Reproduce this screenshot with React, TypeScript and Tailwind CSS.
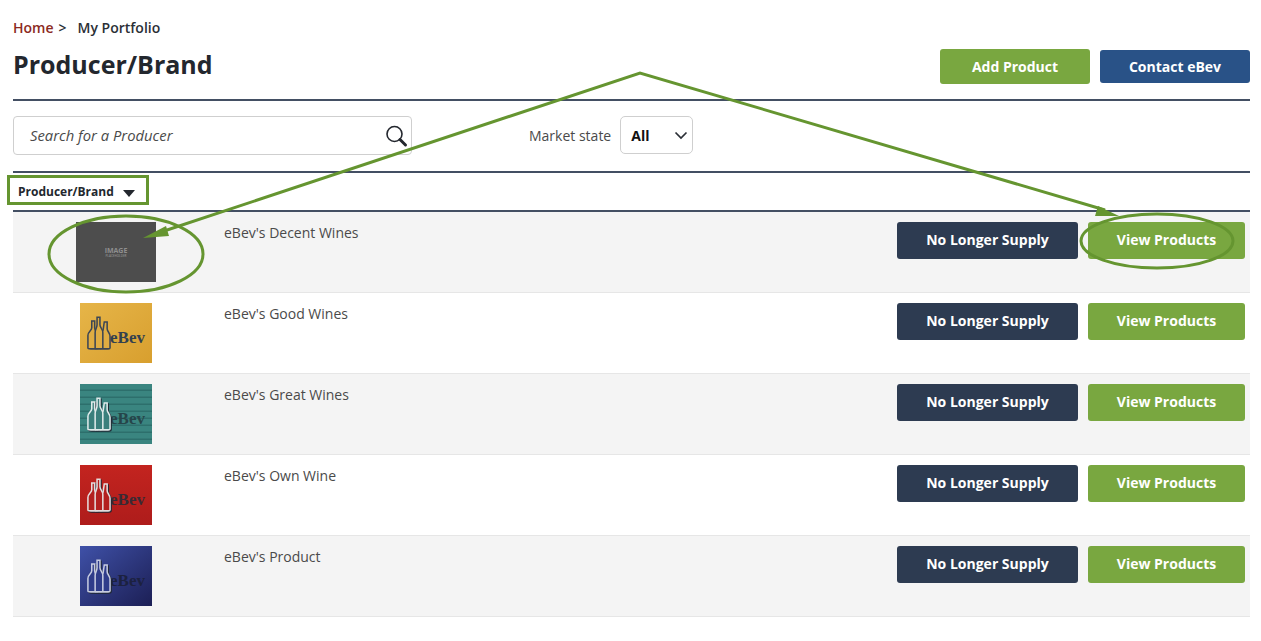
const font = { fontFamily: '"Open Sans", sans-serif' };
const logoFont = { fontFamily: '"Liberation Serif", serif' };

const brands = [
  { name: "eBev's Decent Wines", logo: "placeholder" },
  { name: "eBev's Good Wines", logo: "gold" },
  { name: "eBev's Great Wines", logo: "teal" },
  { name: "eBev's Own Wine", logo: "red" },
  { name: "eBev's Product", logo: "blue" },
];

function Bottles({ color, fill, shadow }: { color: string; fill: string; shadow?: boolean }) {
  return (
    <svg
      viewBox="0 0 26 36"
      className={`h-[35px] w-[25px] shrink-0 ${shadow ? "drop-shadow-[1px_1px_0_#1f2733]" : ""}`}
    >
      <g fill={fill} stroke={color} strokeWidth="1.6">
        <path d="M6 5 h3 v7 c0 3 3 4 3 8 v13 c0 1 -1 1 -2 1 h-5 c-1 0 -3 0 -3 -1 v-13 c0 -4 4 -5 4 -8 z" />
        <path d="M19 6 h3 v7 c0 3 3 4 3 8 v12 c0 1 -1 1 -2 1 h-5 c-1 0 -3 0 -3 -1 v-12 c0 -4 3 -5 3 -8 z" />
        <path d="M11.5 1 h3 v8 c0 3 3 4 3 8 v16 c0 1 -1 1 -2 1 h-4 c-1 0 -2 0 -2 -1 v-16 c0 -4 2 -5 2 -8 z" />
      </g>
    </svg>
  );
}

function LogoText({ className }: { className: string }) {
  return (
    <span className={`ml-[-1px] mt-[9px] text-[17px] font-bold leading-[20px] ${className}`} style={logoFont}>
      eBev
    </span>
  );
}

function Logo({ kind }: { kind: string }) {
  if (kind === "placeholder") {
    return (
      <div className="ml-[63px] flex h-[60px] w-[80px] flex-col items-center justify-center bg-[#4d4d4d] text-[#8f8f8f]">
        <span className="text-[7px] leading-[7px] font-bold">IMAGE</span>
        <span className="text-[3px] leading-[4px] font-semibold">PLACEHOLDER</span>
      </div>
    );
  }
  if (kind === "gold") {
    return (
      <div className="ml-[67px] flex h-[60px] w-[72px] items-center bg-gradient-to-br from-[#e6b548] to-[#d89f2e] pl-[6px]">
        <Bottles color="#3c4654" fill="#e0ad42" />
        <LogoText className="text-[#33404f]" />
      </div>
    );
  }
  if (kind === "teal") {
    return (
      <div className="ml-[67px] flex h-[60px] w-[72px] items-center bg-[repeating-linear-gradient(180deg,#3a8580_0px,#3a8580_5px,#2d6f6c_6px,#2d6f6c_7px)] pl-[6px]">
        <Bottles color="#dfeaea" fill="#3a7f7c" shadow />
        <LogoText className="text-[#26454a]" />
      </div>
    );
  }
  if (kind === "red") {
    return (
      <div className="ml-[67px] flex h-[60px] w-[72px] items-center bg-gradient-to-b from-[#c3241f] to-[#ae1c1b] pl-[6px]">
        <Bottles color="#e4dcdc" fill="#b3201f" shadow />
        <LogoText className="text-[#3a2a34]" />
      </div>
    );
  }
  return (
    <div className="ml-[67px] flex h-[60px] w-[72px] items-center bg-gradient-to-br from-[#3f51a8] to-[#1c1f55] pl-[6px]">
      <Bottles color="#c6cbe0" fill="#2f3c8a" shadow />
      <LogoText className="text-[#1c2140]" />
    </div>
  );
}

function Rule() {
  return <div className="h-[2px] bg-[#434f63]" />;
}

export default function App() {
  return (
    <div className="relative h-[641px] w-[1261px] overflow-hidden bg-white pl-[13px] pr-[11px] pt-[19px]" style={font}>
      {/* Breadcrumb */}
      <div className="flex h-[18px] items-center text-[14px] font-semibold leading-[18px] text-[#2b2f36]">
        <span className="text-[#8c2a22]">Home</span>
        <span className="ml-[5px]">&gt;</span>
        <span className="ml-[11px]">My Portfolio</span>
      </div>

      {/* Title row */}
      <div className="mt-[12px] flex h-[50px] items-start justify-between">
        <h1 className="mt-[-4px] text-[25px] font-bold leading-[38px] text-[#23272e]">Producer/Brand</h1>
        <div className="flex items-center gap-[10px]">
          <button className="h-[35px] w-[150px] rounded-[3px] bg-[#79a740] text-[14px] font-bold text-white">
            Add Product
          </button>
          <button className="h-[33px] w-[150px] rounded-[3px] bg-[#295287] text-[14px] font-bold text-white">
            Contact eBev
          </button>
        </div>
      </div>
      <Rule />

      {/* Filters */}
      <div className="flex h-[70px] items-start pt-[15px]">
        <div className="flex h-[39px] w-[399px] items-center justify-between rounded-[4px] border border-[#cfcfcf] pl-[16px] pr-[3px]">
          <span className="text-[14.8px] italic text-[#4a4a4a]">Search for a Producer</span>
          <svg viewBox="0 0 24 24" className="h-[24px] w-[24px]" fill="none" stroke="#23272e">
            <circle cx="10.5" cy="10" r="7.5" strokeWidth="1.6" />
            <path d="M16 15.5 L21.5 21" strokeWidth="3" strokeLinecap="round" />
          </svg>
        </div>
        <div className="ml-[117px] flex h-[38px] items-center">
          <span className="text-[14px] text-[#4a4a4a]">Market state</span>
          <div className="ml-[9px] flex h-[38px] w-[73px] items-center justify-between rounded-[5px] border border-[#cfcfcf] pl-[10px] pr-[3px]">
            <span className="text-[14px] font-bold text-[#111]">All</span>
            <svg viewBox="0 0 16 16" className="h-[16px] w-[16px]" fill="none" stroke="#2b2f36" strokeWidth="1.7">
              <path d="M2.5 5.5 L8 11 L13.5 5.5" />
            </svg>
          </div>
        </div>
      </div>
      <Rule />

      {/* Table header */}
      <div className="flex h-[37px] items-center pl-[5px]">
        <span className="text-[12px] font-bold text-[#23272e]">Producer/Brand</span>
        <svg viewBox="0 0 12 7" className="ml-[9px] mt-[3px] h-[7px] w-[12px]" fill="#23272e">
          <path d="M0 0 H12 L6 7 Z" />
        </svg>
      </div>
      <Rule />

      {/* Rows */}
      {brands.map((brand, i) => (
        <div
          key={brand.name}
          className={`flex h-[81px] items-start border-b border-[#e6e6e6] pt-[10px] ${i % 2 === 0 ? "bg-[#f4f4f4]" : "bg-white"}`}
        >
          <div className="w-[211px]">
            <Logo kind={brand.logo} />
          </div>
          <div className="flex-1 text-[14px] leading-[22px] text-[#4a4a4a]">{brand.name}</div>
          <div className="flex gap-[10px] pr-[5px]">
            <button className="h-[37px] w-[181px] rounded-[3px] bg-[#2d3b51] pb-[2px] text-[14px] font-bold text-white">
              No Longer Supply
            </button>
            <button className="h-[37px] w-[157px] rounded-[3px] bg-[#79a740] pb-[2px] text-[14px] font-bold text-white">
              View Products
            </button>
          </div>
        </div>
      ))}

      {/* Annotation overlay */}
      <svg className="pointer-events-none absolute left-0 top-0 h-[641px] w-[1261px]" viewBox="0 0 1261 641" fill="none">
        <g stroke="#659530" strokeWidth="3">
          <rect x="8.5" y="176.5" width="139" height="27" />
          <ellipse cx="126" cy="254" rx="77" ry="38" />
          <ellipse cx="1157" cy="241" rx="76" ry="27" />
          <path d="M155 234 L640 73 L1105 210" />
        </g>
        <path d="M143 238 L166 226 L169 236 Z" fill="#659530" />
        <path d="M1119 216 L1095 216 L1098 206 Z" fill="#659530" />
      </svg>
    </div>
  );
}
